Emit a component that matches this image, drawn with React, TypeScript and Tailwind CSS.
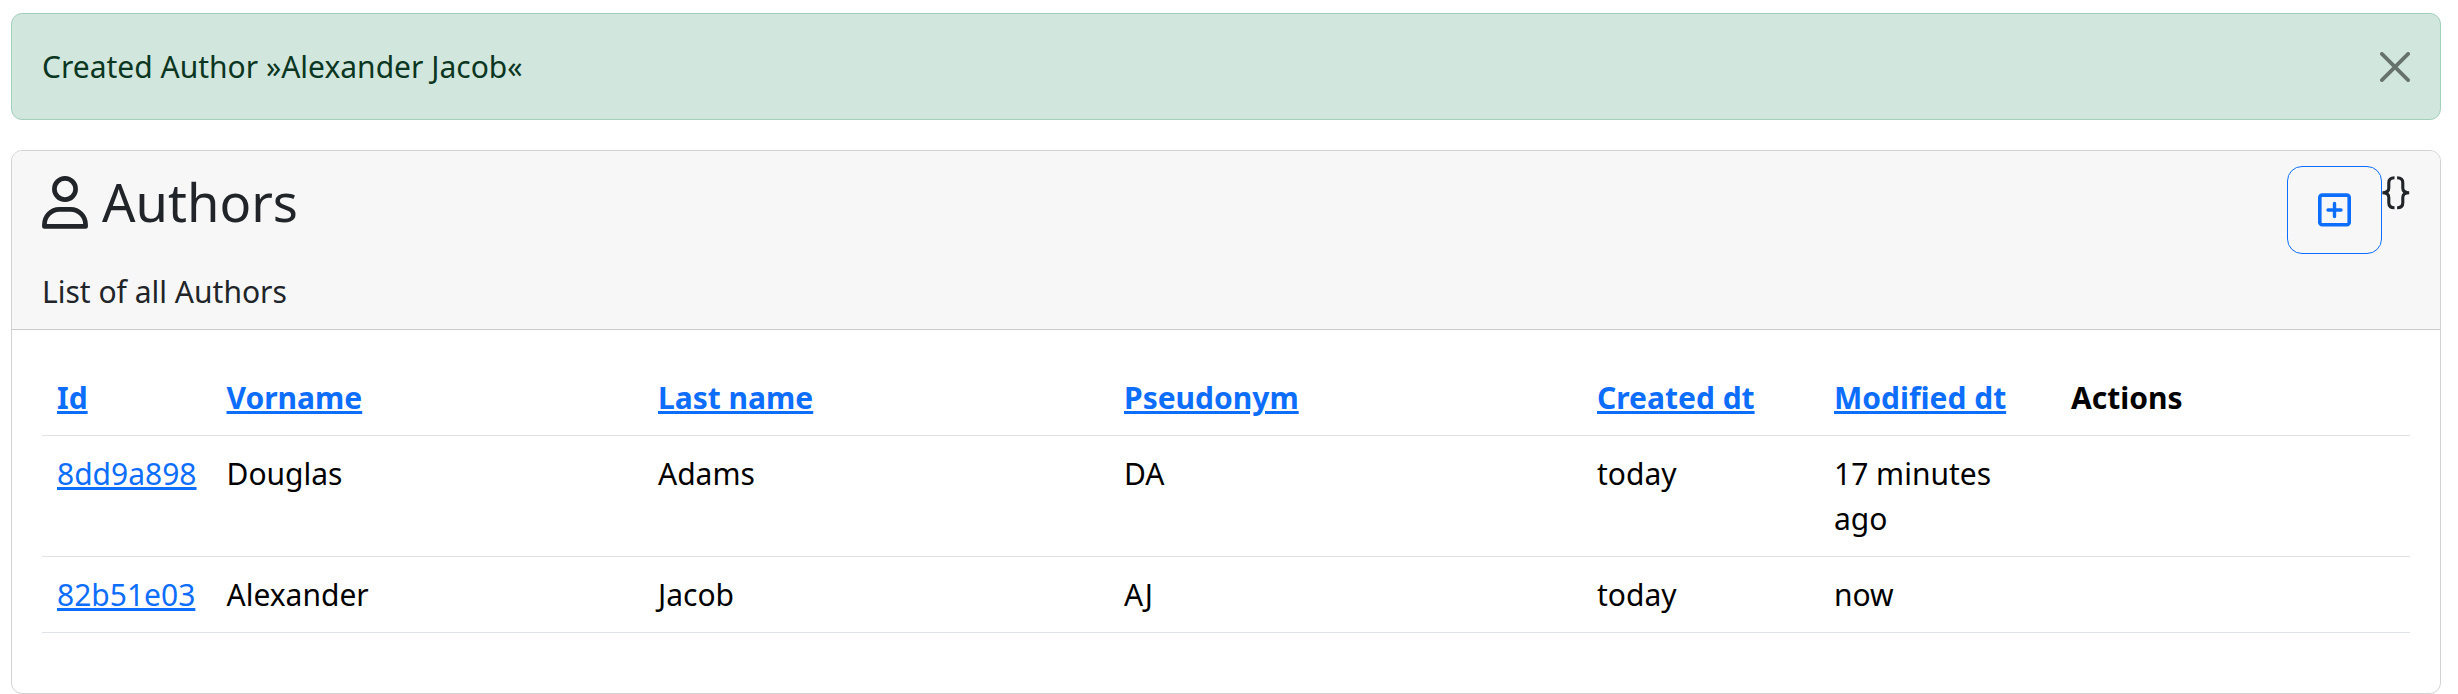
const columns = ["Id", "Vorname", "Last name", "Pseudonym", "Created dt", "Modified dt"];

const rows = [
  ["8dd9a898", "Douglas", "Adams", "DA", "today", "17 minutes ago"],
  ["82b51e03", "Alexander", "Jacob", "AJ", "today", "now"],
];

const linkClass = "text-[#0d6efd] underline decoration-[3px] underline-offset-2";

function CloseIcon() {
  return (
    <svg viewBox="0 0 16 16" className="size-[30px]" fill="#000">
      <path d="M.293.293a1 1 0 0 1 1.414 0L8 6.586 14.293.293a1 1 0 1 1 1.414 1.414L9.414 8l6.293 6.293a1 1 0 0 1-1.414 1.414L8 9.414l-6.293 6.293a1 1 0 0 1-1.414-1.414L6.586 8 .293 1.707a1 1 0 0 1 0-1.414z" />
    </svg>
  );
}

function PersonIcon() {
  return (
    <svg viewBox="0 0 46 54" className="mt-[9px] h-[54px] w-[46px] shrink-0" fill="none" stroke="currentColor" strokeWidth="4.7" strokeLinejoin="round">
      <circle cx="23" cy="14" r="10.6" />
      <path d="M2.4 51.4V50C2.4 41.300 9 34.300 17.500 34.300H28.500C37 34.300 43.600 41.300 43.600 50V51.400Z" />
    </svg>
  );
}

function PlusBoxIcon() {
  return (
    <svg viewBox="0 0 33 34" className="h-[34px] w-[33px]" fill="none" stroke="currentColor" strokeWidth="3.6" strokeLinecap="round">
      <rect x="1.8" y="2.1" width="29.4" height="29.7" rx="2.4" />
      <path d="M10 17H23M16.500 10.500V23.500" strokeWidth="3.400" />
    </svg>
  );
}

function BracesIcon() {
  return (
    <svg viewBox="0 0 28 34" className="mt-[10px] h-[34px] w-[28px] shrink-0" fill="none" stroke="currentColor" strokeWidth="3.100">
      <path d="M12.500 1.700C8.500 1.700 6.800 3.400 6.800 6.700V12C6.800 15.200 4.800 16.700.4 16.700C4.800 16.700 6.800 18.200 6.800 21.400V26.700C6.800 30 8.500 31.700 12.500 31.700" />
      <path d="M15.100 1.700C19.100 1.700 20.800 3.400 20.800 6.700V12C20.800 15.200 22.800 16.700 27.200 16.700C22.800 16.700 20.800 18.200 20.800 21.400V26.700C20.800 30 19.100 31.700 15.100 31.700" />
    </svg>
  );
}

export default function App() {
  return (
    <div className="h-[694px] w-[2452px] overflow-hidden bg-white px-[11px] pt-[13px] font-['Noto_Sans',sans-serif] text-[30px] leading-[45px] text-[#212529]">
      <div className="mb-[30px] flex h-[107px] items-center justify-between rounded-[11px] border border-[#a3cfbb] bg-[#d1e7dd] px-[30px] text-[#0a3622]">
        <span>Created Author »Alexander Jacob«</span>
        <button aria-label="Close" className="opacity-50">
          <CloseIcon />
        </button>
      </div>

      <section className="h-[544px] overflow-hidden rounded-[11px] border border-[#d2d2d2] bg-white">
        <header className="h-[179px] border-b border-[#cbcbcb] bg-[#f7f7f7] px-[30px] pt-[15px]">
          <div className="flex h-[88px] items-start justify-between">
            <h1 className="flex items-start gap-[14px] text-[52.5px] leading-[72px]">
              <PersonIcon />
              Authors
            </h1>
            <div className="flex items-start">
              <button aria-label="Add author" className="flex h-[88px] w-[95px] items-center justify-center rounded-[15px] border border-[#0d6efd] text-[#0d6efd]">
                <PlusBoxIcon />
              </button>
              <BracesIcon />
            </div>
          </div>
          <p className="pt-[15px]">List of all Authors</p>
        </header>

        <div className="p-[30px]">
          <table className="w-full table-fixed border-collapse text-left text-black">
            <colgroup>
              <col className="w-[169.5px]" />
              <col className="w-[431.5px]" />
              <col className="w-[466px]" />
              <col className="w-[473px]" />
              <col className="w-[237px]" />
              <col className="w-[237px]" />
              <col />
            </colgroup>
            <thead>
              <tr className="border-b border-[#dee2e6]">
                {columns.map((name) => (
                  <th key={name} className="p-[15px] font-bold">
                    <a className={linkClass}>{name}</a>
                  </th>
                ))}
                <th className="p-[15px] font-bold">Actions</th>
              </tr>
            </thead>
            <tbody>
              {rows.map((row) => (
                <tr key={row[0]} className="border-b border-[#dee2e6] align-top">
                  {row.map((cell, i) => (
                    <td key={i} className="p-[15px]">
                      {i === 0 ? <a className={linkClass}>{cell}</a> : cell}
                    </td>
                  ))}
                  <td />
                </tr>
              ))}
            </tbody>
          </table>
        </div>
      </section>
    </div>
  );
}
